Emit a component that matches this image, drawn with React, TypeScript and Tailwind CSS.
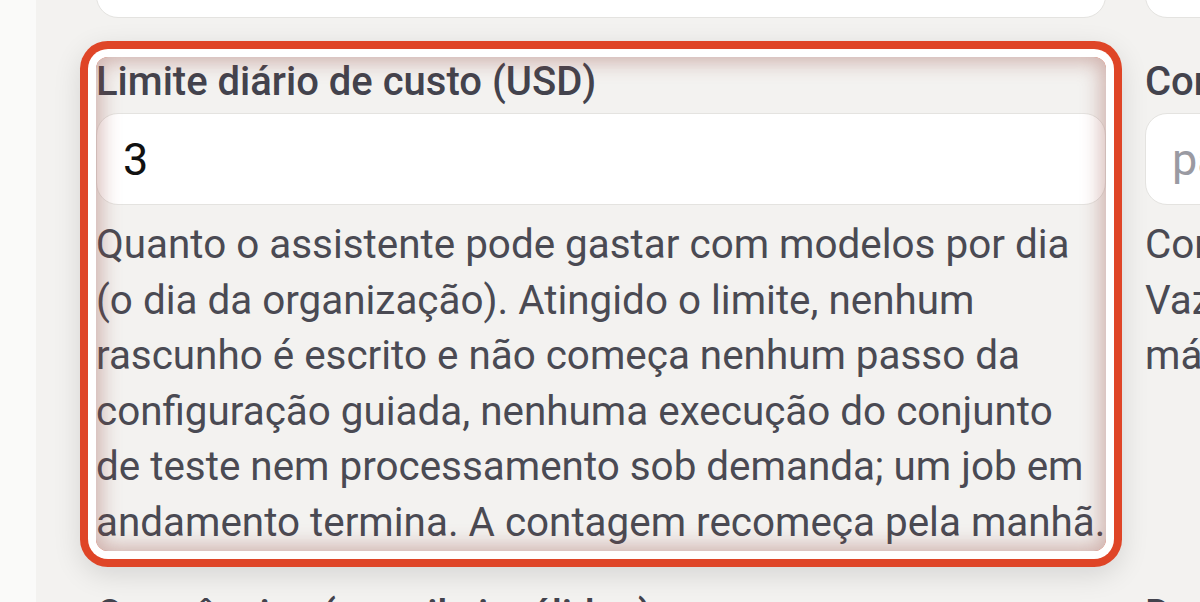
import React from 'react';

const font = { fontFamily: 'Roboto, "Noto Sans", Arial, sans-serif' };

const Field: React.FC<{
  label: string;
  value?: string;
  placeholder?: string;
  help: React.ReactNode;
  highlight?: boolean;
}> = ({ label, value, placeholder, help, highlight }) => (
  <div
    className={
      highlight
        ? 'relative rounded-[12px] shadow-[0_0_0_8px_#ffffff,0_0_0_16px_#df4527,0_8px_28px_16px_rgba(0,0,0,0.12)]'
        : 'relative'
    }
  >
    <label className="block text-[40px] leading-[50px] font-medium text-[#43434d]">{label}</label>
    <input
      readOnly
      defaultValue={value}
      placeholder={placeholder}
      className="mt-[6px] block h-[92px] w-full rounded-[22px] border-[1.5px] border-[#e4e3e0] bg-white px-[26px] text-[45px] text-[#111111] placeholder:text-[#9a9aa2] outline-none"
    />
    <p className="mt-[12px] text-[40.4px] leading-[55.6px] text-[#4a4a53]">{help}</p>
    {highlight && (
      <div className="pointer-events-none absolute inset-0 rounded-[12px] shadow-[inset_0_0_20px_5px_rgba(150,70,60,0.38)]" />
    )}
  </div>
);

export default function App() {
  return (
    <div className="flex h-[602px] w-[1200px] overflow-hidden bg-[#f3f2f0]" style={font}>
      <div className="w-[36px] shrink-0 bg-[#fafaf9]" />
      <div className="flex-1 overflow-hidden pl-[60px]">
        <div className="mt-[-74px] grid w-[2059px] grid-cols-[1010px_1010px] gap-x-[39px] gap-y-[39px]">
          <input
            readOnly
            className="block h-[92px] w-full rounded-[22px] border-[1.5px] border-[#e4e3e0] bg-white outline-none"
          />
          <input
            readOnly
            className="block h-[92px] w-full rounded-[22px] border-[1.5px] border-[#e4e3e0] bg-white outline-none"
          />
          <Field
            highlight
            label="Limite diário de custo (USD)"
            value="3"
            help="Quanto o assistente pode gastar com modelos por dia (o dia da organização). Atingido o limite, nenhum rascunho é escrito e não começa nenhum passo da configuração guiada, nenhuma execução do conjunto de teste nem processamento sob demanda; um job em andamento termina. A contagem recomeça pela manhã."
          />
          <Field
            label="Contato para alertas"
            placeholder="padrão da organização"
            help={
              <>
                Contato avisado quando o gasto chega a 80%.
                <br />
                Vazio usa o responsável pela organização, no
                <br />
                máximo um aviso por dia.
              </>
            }
          />
          <div className="text-[40px] leading-[50px] font-medium text-[#43434d]">
            Ocorrências (e-mails inválidos)
          </div>
          <div className="text-[40px] leading-[50px] font-medium text-[#43434d]">Destinatários extras</div>
        </div>
      </div>
    </div>
  );
}
